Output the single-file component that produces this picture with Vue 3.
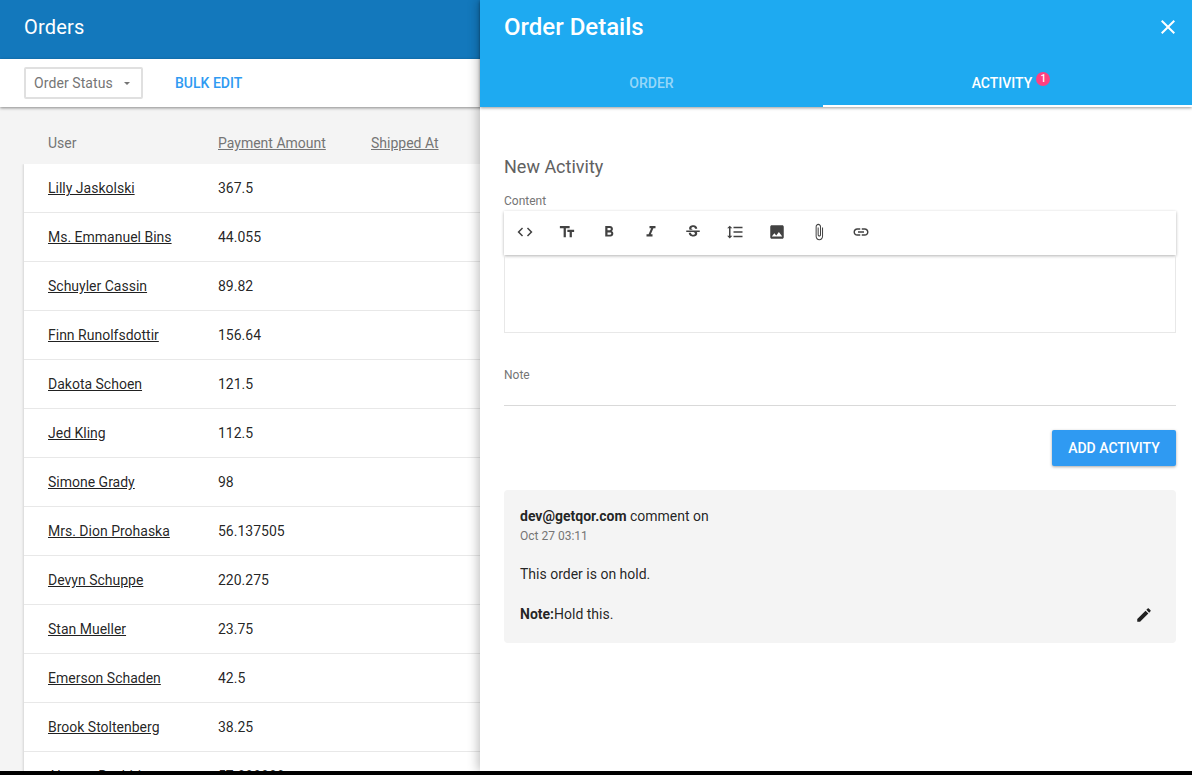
<script setup>
const rows = [
  { user: 'Lilly Jaskolski', amount: '367.5' },
  { user: 'Ms. Emmanuel Bins', amount: '44.055' },
  { user: 'Schuyler Cassin', amount: '89.82' },
  { user: 'Finn Runolfsdottir', amount: '156.64' },
  { user: 'Dakota Schoen', amount: '121.5' },
  { user: 'Jed Kling', amount: '112.5' },
  { user: 'Simone Grady', amount: '98' },
  { user: 'Mrs. Dion Prohaska', amount: '56.137505' },
  { user: 'Devyn Schuppe', amount: '220.275' },
  { user: 'Stan Mueller', amount: '23.75' },
  { user: 'Emerson Schaden', amount: '42.5' },
  { user: 'Brook Stoltenberg', amount: '38.25' },
  { user: 'Alverna Bashirian', amount: '57.888888' }
]

// material icon paths for the editor toolbar
const tools = [
  { name: 'code', d: 'M9.4 16.6L4.8 12l4.6-4.6L8 6l-6 6 6 6 1.4-1.4zm5.2 0l4.6-4.6-4.6-4.6L16 6l6 6-6 6-1.4-1.4z' },
  { name: 'heading', d: 'M2.5 4v3h5v12h3V7h5V4h-13zm19 5h-9v3h3v7h3v-7h3V9z' },
  { name: 'bold', d: 'M15.6 10.79c.97-.67 1.65-1.77 1.65-2.79 0-2.26-1.75-4-4-4H7v14h7.04c2.09 0 3.71-1.7 3.71-3.79 0-1.52-.86-2.82-2.15-3.42zM10 6.5h3c.83 0 1.5.67 1.5 1.5s-.67 1.5-1.5 1.5h-3v-3zm3.5 9H10v-3h3.5c.83 0 1.5.67 1.5 1.5s-.67 1.5-1.5 1.5z' },
  { name: 'italic', d: 'M10 4v3h2.21l-3.42 8H6v3h8v-3h-2.21l3.42-8H18V4z' },
  { name: 'strike', d: 'M7.24 8.75c-.26-.48-.39-1.03-.39-1.67 0-.61.13-1.16.4-1.67.26-.5.63-.93 1.11-1.29.48-.35 1.05-.63 1.7-.83.66-.19 1.39-.29 2.18-.29.81 0 1.54.11 2.21.34.66.22 1.23.54 1.69.94.47.4.83.88 1.08 1.43.25.55.38 1.15.38 1.81h-3.01c0-.31-.05-.59-.15-.85-.09-.27-.24-.49-.44-.68-.2-.19-.45-.33-.75-.44-.3-.1-.66-.16-1.06-.16-.39 0-.74.04-1.03.13-.29.09-.53.21-.72.36-.19.16-.34.34-.44.55-.1.21-.15.43-.15.66 0 .48.25.88.74 1.21.38.25.77.48 1.41.7H7.39c-.05-.08-.11-.17-.15-.25zM21 12v-2H3v2h9.62c.18.07.4.14.55.2.37.17.66.34.87.51.21.17.35.36.43.57.07.2.11.43.11.69 0 .23-.05.45-.14.66-.09.2-.23.38-.42.53-.19.15-.42.26-.71.35-.29.08-.63.13-1.01.13-.43 0-.83-.04-1.18-.13s-.66-.23-.91-.42c-.25-.19-.45-.44-.59-.75-.14-.31-.25-.76-.25-1.21H6.4c0 .55.08 1.13.24 1.58.16.45.37.85.65 1.21.28.35.6.66.98.92.37.26.78.48 1.22.65.44.17.9.3 1.38.39.48.08.96.13 1.44.13.8 0 1.53-.09 2.18-.28s1.21-.45 1.67-.79c.46-.34.82-.77 1.07-1.27s.38-1.07.38-1.71c0-.6-.1-1.14-.31-1.61-.05-.11-.11-.23-.17-.33H21z' },
  { name: 'spacing', d: 'M6 7h2.5L5 3.5 1.5 7H4v10H1.5L5 20.5 8.5 17H6V7zm4-2v2h12V5H10zm0 14h12v-2H10v2zm0-6h12v-2H10v2z' },
  { name: 'image', d: 'M21 19V5c0-1.1-.9-2-2-2H5c-1.1 0-2 .9-2 2v14c0 1.1.9 2 2 2h14c1.1 0 2-.9 2-2zM8.5 13.5l2.5 3.01L14.5 12l4.5 6H5l3.5-4.5z' },
  { name: 'attach', d: 'M16.5 6v11.5c0 2.21-1.79 4-4 4s-4-1.79-4-4V5c0-1.38 1.12-2.5 2.5-2.5s2.5 1.12 2.5 2.5v10.5c0 .55-.45 1-1 1s-1-.45-1-1V6H10v9.5c0 1.38 1.12 2.5 2.5 2.5s2.5-1.12 2.5-2.5V5c0-2.21-1.79-4-4-4S7 2.79 7 5v12.5c0 3.04 2.46 5.5 5.5 5.5s5.5-2.46 5.5-5.5V6h-1.5z' },
  { name: 'link', d: 'M3.9 12c0-1.71 1.39-3.1 3.1-3.1h4V7H7c-2.76 0-5 2.24-5 5s2.24 5 5 5h4v-1.9H7c-1.71 0-3.1-1.39-3.1-3.1zM8 13h8v-2H8v2zm9-6h-4v1.9h4c1.71 0 3.1 1.39 3.1 3.1s-1.39 3.1-3.1 3.1h-4V17h4c2.76 0 5-2.24 5-5s-2.24-5-5-5z' }
]
</script>

<template>
  <div class="screen">
    <div class="page">
      <header class="page-header">Orders</header>
      <div class="filters">
        <div class="status-select">
          <span>Order Status</span>
          <span class="caret"></span>
        </div>
        <a class="bulk-edit">BULK EDIT</a>
      </div>
      <div class="list">
        <div class="list-head">
          <span class="col-user">User</span>
          <span class="col-amount sortable">Payment Amount</span>
          <span class="col-shipped sortable">Shipped At</span>
        </div>
        <div class="rows">
          <div v-for="row in rows" :key="row.user" class="row">
            <a class="col-user user-link">{{ row.user }}</a>
            <span class="col-amount">{{ row.amount }}</span>
          </div>
        </div>
      </div>

      <aside class="drawer">
        <div class="drawer-head">
          <div class="drawer-title">
            <h1>Order Details</h1>
            <svg class="close" viewBox="0 0 24 24" width="24" height="24">
              <path fill="#fff" d="M19 6.41L17.59 5 12 10.59 6.41 5 5 6.41 10.59 12 5 17.59 6.41 19 12 13.41 17.59 19 19 17.59 13.41 12z" />
            </svg>
          </div>
          <div class="tabs">
            <div class="tab tab-order">ORDER</div>
            <div class="tab active">
              <span class="tab-label">ACTIVITY<span class="badge">1</span></span>
            </div>
          </div>
        </div>

        <div class="drawer-body">
          <h2>New Activity</h2>
          <label class="field-label">Content</label>
          <div class="toolbar">
            <span v-for="tool in tools" :key="tool.name" class="tool">
              <svg viewBox="0 0 24 24" width="18" height="18" :class="{ attach: tool.name === 'attach' }">
                <path fill="#424242" :d="tool.d" />
              </svg>
            </span>
          </div>
          <div class="editor"></div>

          <label class="field-label note-label">Note</label>
          <div class="note-line"></div>

          <div class="actions">
            <button class="add-btn">ADD ACTIVITY</button>
          </div>

          <div class="activity">
            <div class="activity-top"><b>dev@getqor.com</b> comment on</div>
            <div class="activity-date">Oct 27 03:11</div>
            <div class="activity-text">This order is on hold.</div>
            <div class="activity-note">
              <span><b>Note:</b>Hold this.</span>
              <svg class="edit-icon" viewBox="0 0 24 24" width="18" height="18">
                <path fill="#212121" d="M3 17.25V21h3.75L17.81 9.94l-3.75-3.75L3 17.25zM20.71 7.04c.39-.39.39-1.02 0-1.41l-2.34-2.34c-.39-.39-1.02-.39-1.41 0l-1.83 1.83 3.75 3.75 1.83-1.83z" />
              </svg>
            </div>
          </div>
        </div>
      </aside>
    </div>
  </div>
</template>

<style>
html, body {
  margin: 0;
  background: #000;
}
</style>

<style scoped>
.screen {
  height: 775px;
  background: #000;
  overflow: hidden;
  font-family: Roboto, "Liberation Sans", sans-serif;
}
.page {
  position: relative;
  height: 771px;
  overflow: hidden;
  background: #f4f4f4;
}
.page-header {
  height: 59px;
  background: #1378bc;
  color: #fff;
  font-size: 20px;
  letter-spacing: 0.2px;
  line-height: 54px;
  padding-left: 24px;
  box-sizing: border-box;
}
.filters {
  position: relative;
  display: flex;
  align-items: center;
  height: 48px;
  padding-left: 24px;
  background: #fff;
  box-shadow: 0 1px 3px rgba(0, 0, 0, 0.45);
}
.status-select {
  display: flex;
  align-items: center;
  box-sizing: border-box;
  width: 119px;
  height: 32px;
  padding-left: 8px;
  border: 2px solid #e0e0e0;
  border-radius: 2px;
  font-size: 14px;
  letter-spacing: 0.08px;
  color: #757575;
}
.caret {
  width: 0;
  height: 0;
  margin-left: 11px;
  border-left: 3.5px solid transparent;
  border-right: 3.5px solid transparent;
  border-top: 3.5px solid #757575;
}
.bulk-edit {
  margin-left: 32px;
  font-size: 14px;
  font-weight: 500;
  color: #2f9af2;
}
.list {
  padding-left: 24px;
}
.list-head {
  display: flex;
  align-items: center;
  height: 57px;
  padding-top: 15px;
  box-sizing: border-box;
  font-size: 14px;
  color: #757575;
}
.col-user {
  margin-left: 24px;
  width: 170px;
  flex: none;
}
.col-amount {
  width: 153px;
  flex: none;
}
.sortable {
  text-decoration: underline;
}
.col-shipped {
  flex: none;
}
.rows {
  background: #fff;
  box-shadow: -1px 0 2px rgba(0, 0, 0, 0.12);
  clip-path: inset(0 0 0 -3px);
}
.row {
  display: flex;
  align-items: center;
  box-sizing: border-box;
  height: 49px;
  border-bottom: 1px solid #e8e8e8;
  font-size: 14px;
  color: rgba(0, 0, 0, 0.87);
}
.user-link {
  text-decoration: underline;
}
.drawer {
  position: absolute;
  top: 0;
  left: 480px;
  right: 0;
  bottom: 0;
  background: #fff;
  box-shadow: -2px 0 10px rgba(0, 0, 0, 0.25);
}
.drawer-head {
  height: 107px;
  background: #1eaaf1;
  color: #fff;
  box-shadow: 0 1px 3px rgba(0, 0, 0, 0.4);
}
.drawer-title {
  display: flex;
  justify-content: space-between;
  align-items: center;
  height: 59px;
  padding: 0 12px 5px 24px;
  box-sizing: border-box;
}
.drawer-title h1 {
  margin: 0;
  font-size: 24px;
  font-weight: 500;
}
.tabs {
  display: flex;
  height: 48px;
}
.tab {
  box-sizing: border-box;
  flex: 1;
  padding-bottom: 1px;
  display: flex;
  justify-content: center;
  align-items: center;
  font-size: 14px;
  font-weight: 500;
  color: rgba(255, 255, 255, 0.55);
}
.tab-order {
  flex: 0 0 343px;
}
.tab.active {
  border-bottom: 2px solid #fff;
  padding-right: 11px;
  padding-bottom: 0;
  padding-top: 1px;
  color: #fff;
}
.tab-label {
  position: relative;
}
.badge {
  position: absolute;
  top: -3px;
  left: 100%;
  margin-left: 4px;
  width: 14px;
  height: 14px;
  line-height: 14px;
  border-radius: 50%;
  background: #ff4081;
  color: #fff;
  font-size: 10px;
  text-align: center;
}
.drawer-body {
  padding: 48px 16px 0 24px;
}
h2 {
  margin: 0;
  font-size: 18px;
  font-weight: 400;
  line-height: 24px;
  color: #616161;
}
.field-label {
  display: block;
  margin-top: 15px;
  font-size: 12px;
  line-height: 14px;
  color: #757575;
}
.toolbar {
  display: flex;
  align-items: center;
  box-sizing: border-box;
  height: 44px;
  margin-top: 3px;
  padding-bottom: 2px;
  background: #fff;
  box-shadow: 0 1px 3px rgba(0, 0, 0, 0.3);
}
.tool {
  display: flex;
  justify-content: center;
  width: 42px;
}
.attach {
  transform: scaleX(0.9);
}
.editor {
  box-sizing: border-box;
  height: 78px;
  border: 1px solid #e8e8e8;
  border-top: 0;
}
.note-label {
  margin-top: 35px;
}
.note-line {
  height: 1px;
  margin-top: 23px;
  background: #d9d9d9;
}
.actions {
  display: flex;
  justify-content: flex-end;
  margin-top: 24px;
}
.add-btn {
  width: 124px;
  height: 36px;
  border: 0;
  border-radius: 2px;
  background: #2f9af2;
  color: #fff;
  font-family: inherit;
  font-size: 14px;
  font-weight: 500;
  box-shadow: 0 1px 3px rgba(0, 0, 0, 0.35);
}
.activity {
  box-sizing: border-box;
  height: 153px;
  margin-top: 24px;
  padding: 16px 16px 0;
  background: #f4f4f4;
  border-radius: 4px;
  font-size: 14px;
  color: rgba(0, 0, 0, 0.87);
}
.activity-top {
  line-height: 20px;
}
.activity-top b, .activity-note b {
  font-weight: 700;
}
.activity-date {
  margin-top: 1px;
  font-size: 12px;
  line-height: 18px;
  color: #757575;
}
.activity-text {
  margin-top: 19px;
  line-height: 20px;
}
.activity-note {
  display: flex;
  justify-content: space-between;
  align-items: center;
  margin-top: 20px;
  line-height: 20px;
}
.edit-icon {
  margin: 2px 7px 0 0;
}
</style>
